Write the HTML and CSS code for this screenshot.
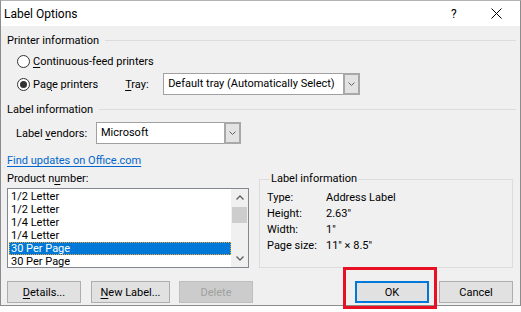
FILE: index.html
```html
<!DOCTYPE html>
<html lang="en">
<head>
  <meta charset="UTF-8" />
  <title>Label Options</title>
  <link rel="stylesheet" href="styles.css">
</head>
<body>

<div class="window">
  <div class="titlebar">
    <span class="title">Label Options</span>
    <span class="help">?</span>
    <span class="close">
      <svg width="11" height="11" viewBox="0 0 11 11"><path d="M0.5 0.5L10.5 10.5M10.5 0.5L0.5 10.5" stroke="#000" stroke-width="1" fill="none"/></svg>
    </span>
  </div>

  <div class="content">
    <div class="group-head"><span>Printer information</span></div>

    <div class="radio-row first">
      <span class="radio"></span>
      <span><u>C</u>ontinuous-feed printers</span>
    </div>
    <div class="radio-row second">
      <span class="radio checked"></span>
      <span>Pa<u>g</u>e printers</span>
      <span class="tray-label"><u>T</u>ray:</span>
      <div class="select tray">
        <span class="select-value">Default tray (Automatically Select)</span>
        <span class="select-btn">
          <svg width="7" height="4" viewBox="0 0 7 4"><path d="M0.5 0.5L3.5 3.5L6.5 0.5" stroke="#606060" fill="none"/></svg>
        </span>
      </div>
    </div>

    <div class="group-head second-head"><span>Label information</span></div>

    <div class="vendor-row">
      <span class="vendor-label">Label <u>v</u>endors:</span>
      <div class="select vendor">
        <span class="select-value">Microsoft</span>
        <span class="select-btn">
          <svg width="7" height="4" viewBox="0 0 7 4"><path d="M0.5 0.5L3.5 3.5L6.5 0.5" stroke="#606060" fill="none"/></svg>
        </span>
      </div>
    </div>

    <div class="lower">
      <div class="left-col">
        <a class="link" href="#">Find updates on Office.com</a>
        <div class="field-label">Product n<u>u</u>mber:</div>
        <div class="listbox">
          <div class="items">
            <div class="item">1/2 Letter</div>
            <div class="item">1/2 Letter</div>
            <div class="item">1/4 Letter</div>
            <div class="item">1/4 Letter</div>
            <div class="item selected">30 Per Page</div>
            <div class="item">30 Per Page</div>
          </div>
          <div class="scrollbar">
            <span class="arrow">
              <svg width="8" height="5" viewBox="0 0 8 5"><path d="M0.5 4.5L4 1L7.5 4.5" stroke="#606060" stroke-width="1.3" fill="none"/></svg>
            </span>
            <span class="thumb"></span>
            <span class="track"></span>
            <span class="arrow">
              <svg width="8" height="5" viewBox="0 0 8 5"><path d="M0.5 0.5L4 4L7.5 0.5" stroke="#606060" stroke-width="1.3" fill="none"/></svg>
            </span>
          </div>
        </div>
      </div>

      <fieldset class="info-box">
        <legend>Label information</legend>
        <div class="info-grid">
          <span>Type:</span><span>Address Label</span>
          <span>Height:</span><span>2.63"</span>
          <span>Width:</span><span>1"</span>
          <span>Page size:</span><span>11" × 8.5"</span>
        </div>
      </fieldset>
    </div>

    <div class="buttons">
      <button class="btn"><u>D</u>etails...</button>
      <button class="btn new-label"><u>N</u>ew Label...</button>
      <button class="btn delete" disabled>Delete</button>
      <span class="spacer"></span>
      <div class="ok-wrap">
        <button class="btn ok">OK</button>
        <span class="highlight"></span>
      </div>
      <button class="btn cancel">Cancel</button>
    </div>
  </div>
</div>

<div class="behind"></div>

</body>
</html>
```

FILE: styles.css
```css
* {
  margin: 0; padding: 0; box-sizing: border-box;
}
body {
  width: 521px;
  height: 312px;
  overflow: hidden;
  background: #f7f7f7;
  font-family: Roboto, "Noto Sans", sans-serif;
  font-size: 11px;
  color: #000;
}
u {
  text-decoration: underline;
  text-underline-offset: 2px;
}

.window {
  height: 306px;
  background: #f0f0f0;
  border: 1px solid #8c8c8c;
  border-top-color: #b4b4b4;
}

.titlebar {
  height: 25px;
  background: #fff;
  display: flex;
  align-items: center;
  padding-left: 3px;
}
.title {
  font-size: 12px;
  flex-grow: 1;
}
.help {
  font-size: 12px;
  width: 40px;
}
.close {
  width: 29px;
  display: flex;
  align-items: center;
}

.content {
  padding: 0 7px 0 6px;
}

.group-head {
  display: flex;
  align-items: center;
  height: 14px;
  margin-top: 7px;
  margin-right: -3px;
}
.group-head::after {
  content: "";
  flex-grow: 1;
  height: 1px;
  background: #dcdcdc;
  margin-left: 6px;
}
.second-head {
  margin-top: 7px;
}

.radio-row {
  display: flex;
  align-items: center;
  padding-left: 10px;
}
.radio-row.first {
  height: 16px;
  margin-top: 6px;
}
.radio-row.second {
  height: 22px;
  margin-top: 4px;
}
.radio {
  width: 13px;
  height: 13px;
  border: 1px solid #333;
  border-radius: 50%;
  background: #fff;
  margin-right: 3px;
  display: flex;
  align-items: center;
  justify-content: center;
}
.radio.checked::after {
  content: "";
  width: 7px;
  height: 7px;
  border-radius: 50%;
  background: #333;
}
.tray-label {
  margin-left: 27px;
  width: 38px;
}

.select {
  display: flex;
  height: 22px;
  border: 1px solid #a0a0a0;
  background: #fff;
}
.select-value {
  flex-grow: 1;
  padding-left: 4px;
  line-height: 20px;
  white-space: nowrap;
  overflow: hidden;
}
.select-btn {
  width: 17px;
  flex-shrink: 0;
  margin: -1px -1px -1px 0;
  border: 2px solid #a8a8a8;
  background: #e3e3e3;
  display: flex;
  align-items: center;
  justify-content: center;
}
.select.tray {
  width: 197px;
}
.select.vendor {
  width: 145px;
}

.vendor-row {
  display: flex;
  align-items: center;
  height: 22px;
  margin-top: 6px;
  padding-left: 9px;
}
.vendor-label {
  width: 80px;
}

.lower {
  display: flex;
  align-items: flex-end;
  gap: 10px;
}
.left-col {
  width: 242px;
  display: flex;
  flex-direction: column;
}
.link {
  color: #0066cc;
  text-decoration: underline;
  text-underline-offset: 2px;
  line-height: 14px;
  margin-top: 10px;
  align-self: flex-start;
}
.field-label {
  line-height: 14px;
  margin-top: 4px;
}
.listbox {
  margin-top: 2px;
  height: 80px;
  border: 1px solid #828790;
  background: #fff;
  display: flex;
  overflow: hidden;
}
.items {
  flex-grow: 1;
  padding: 1px 0 0 1px;
}
.item {
  height: 13px;
  line-height: 13px;
  padding-left: 2px;
  white-space: nowrap;
}
.item.selected {
  background: #0078d7;
  color: #fff;
  outline: 1px dotted #e8a33d;
  outline-offset: -1px;
}
.scrollbar {
  width: 17px;
  background: #f0f0f0;
  display: flex;
  flex-direction: column;
}
.arrow {
  height: 17px;
  display: flex;
  align-items: center;
  justify-content: center;
}
.thumb {
  height: 16px;
  margin: 1px 1px 0;
  background: #cdcdcd;
}
.track {
  flex-grow: 1;
}

.info-box {
  flex-grow: 1;
  height: 96px;
  border: 1px solid #dcdcdc;
  padding: 4px 0 0 7px;
}
.info-box legend {
  padding: 0 1px;
  margin-left: 3px;
  line-height: 14px;
}
.info-grid {
  display: grid;
  grid-template-columns: 59px 1fr;
  grid-auto-rows: 16px;
  line-height: 16px;
}

.buttons {
  display: flex;
  align-items: center;
  margin-top: 13px;
}
.btn {
  width: 74px;
  height: 22px;
  font: inherit;
  color: #000;
  background: #e1e1e1;
  border: 1px solid #adadad;
}
.new-label {
  width: 79px;
  margin-left: 10px;
}
.delete {
  margin-left: 9px;
  background: #cccccc;
  border-color: #bfbfbf;
  color: #a0a0a0;
}
.spacer {
  flex-grow: 1;
}
.ok-wrap {
  position: relative;
}
.ok {
  border: 2px solid #0078d7;
}
.highlight {
  position: absolute;
  left: -12px;
  top: -14px;
  width: 94px;
  height: 42px;
  border: 3px solid #e81123;
}
.cancel {
  margin-left: 10px;
}

.behind {
  height: 6px;
  background: #fdfdfd;
}
```
